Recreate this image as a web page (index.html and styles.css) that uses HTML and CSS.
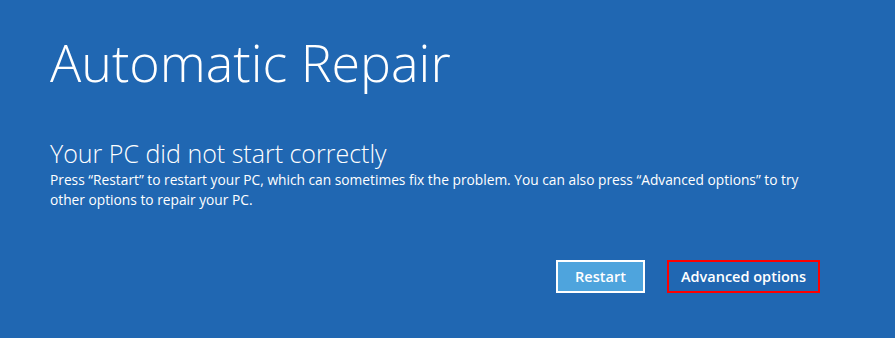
FILE: index.html
```html
<!DOCTYPE html>
<html lang="en">
<head>
  <meta charset="UTF-8">
  <title>Automatic Repair</title>
  <link rel="stylesheet" href="styles.css">
</head>
<body>
  <div class="screen">
    <h1 class="title">Automatic Repair</h1>
    <h2 class="subtitle">Your PC did not start correctly</h2>
    <p class="message">Press “Restart” to restart your PC, which can sometimes fix the problem. You can also press “Advanced options” to try other options to repair your PC.</p>
    <div class="actions">
      <button class="btn btn-primary">Restart</button>
      <button class="btn btn-outlined">Advanced options</button>
    </div>
  </div>
</body>
</html>
```

FILE: styles.css
```css
html, body {
  margin: 0;
  padding: 0;
  height: 100%;
  background-color: #2067b2;
  color: #fff;
  font-family: 'Open Sans', 'Segoe UI', sans-serif;
  overflow: hidden;
}
.screen {
  display: flex;
  flex-direction: column;
  padding: 22px 0 0 50px;
  width: 770px;
}
.title {
  margin: 0;
  font-size: 52px;
  font-weight: 300;
  line-height: 80px;
}
.subtitle {
  margin: 34px 0 0;
  font-size: 25px;
  font-weight: 300;
  line-height: 34px;
}
.message {
  margin: 0;
  font-size: 13.75px;
  line-height: 20px;
}
.actions {
  display: flex;
  justify-content: flex-end;
  gap: 22px;
  margin-top: 50px;
}
.btn {
  font-family: inherit;
  font-size: 14.5px;
  font-weight: 600;
  color: #fff;
  height: 33px;
  padding: 0 4px;
  box-sizing: border-box;
  white-space: nowrap;
  cursor: pointer;
}
.btn-primary {
  width: 89px;
  background-color: #4ea4dd;
  border: 2px solid #fff;
}
.btn-outlined {
  width: 153px;
  background-color: #2067b2;
  border: 2px solid #f00;
}
```
